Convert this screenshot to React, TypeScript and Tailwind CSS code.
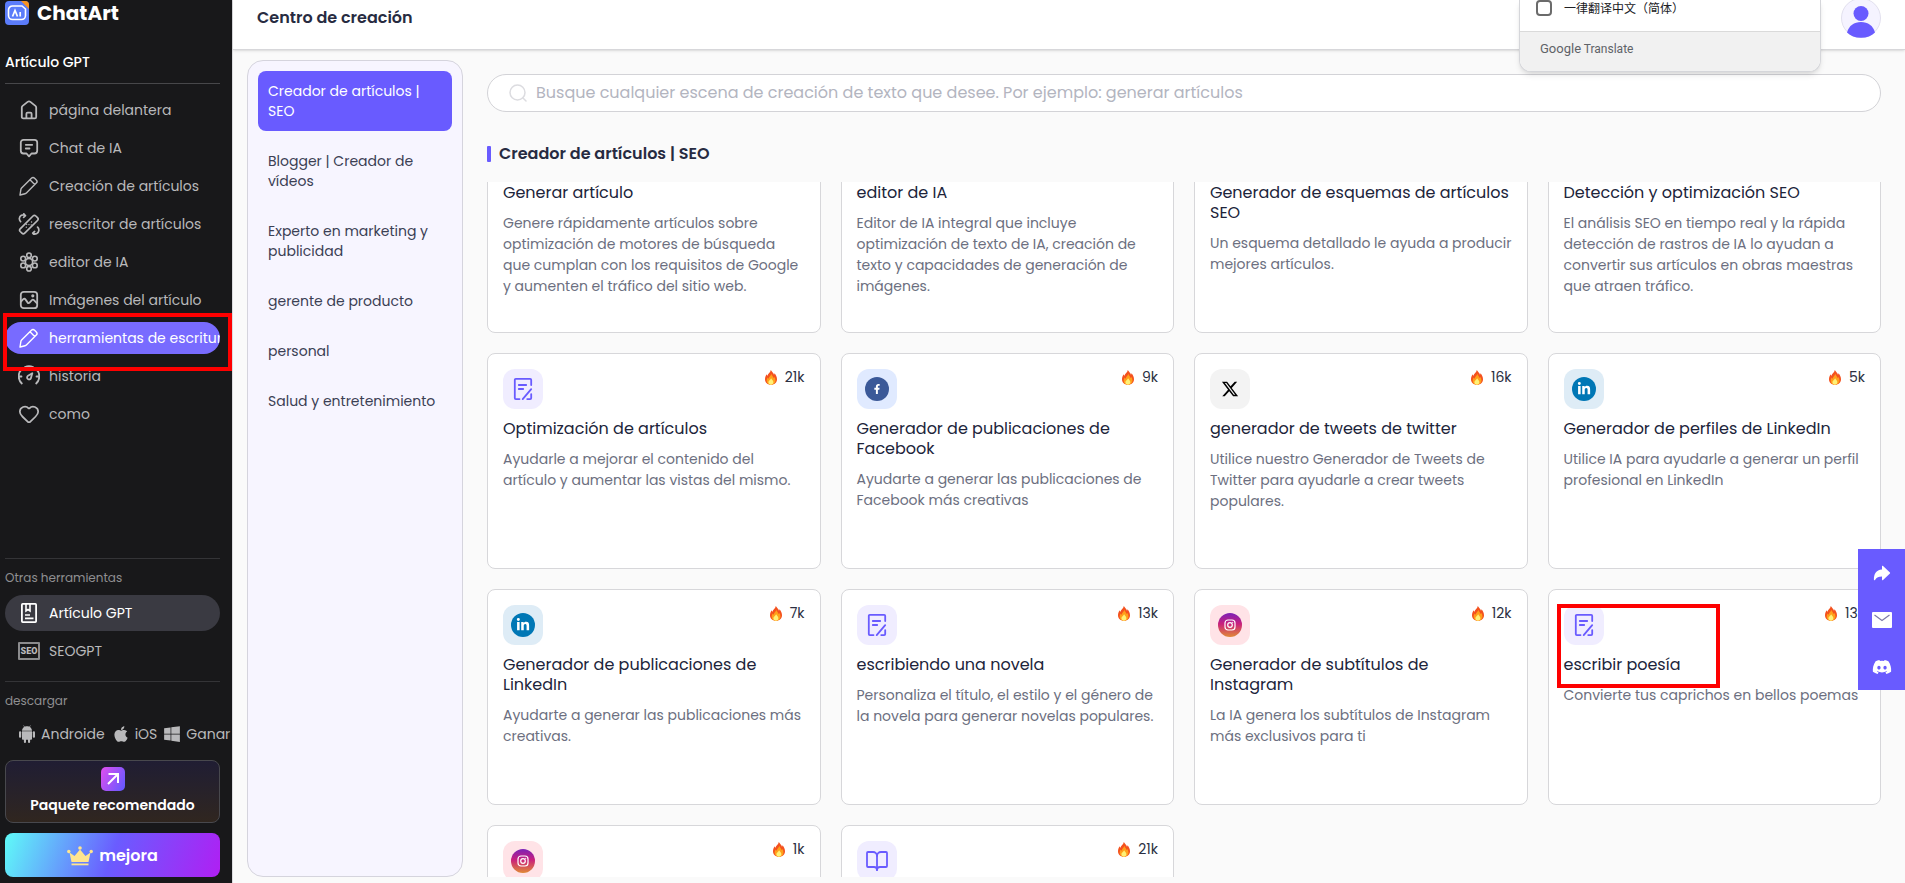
import React, { useState } from "react"
import { BookOpen, Heart } from "lucide-react";
import { FaApple, FaWindows, FaFacebookF, FaLinkedinIn, FaDiscord } from "react-icons/fa";
import { FaXTwitter } from "react-icons/fa6";
import { IoArrowRedo } from "react-icons/io5";

/* ---------- iconos ---------- */

const Line = ({ children }: { children: React.ReactNode }) => (
    <svg viewBox="0 0 22 22" className="h-[22px] w-[22px] shrink-0" fill="none" stroke="currentColor" strokeWidth="1.8" strokeLinecap="round" strokeLinejoin="round">
        {children}
    </svg>
)

const HomeIcon = () => (
    <Line>
        <path d="M3.8 8.6c0-.7.3-1.3.8-1.7l5-4c.8-.6 2-.6 2.8 0l5 4c.5.4.8 1 .8 1.7v9.3c0 .8-.6 1.4-1.4 1.4H5.2c-.8 0-1.400-.6-1.400-1.400z" />
        <path d="M8.4 19v-4.200c0-.7.5-1.200 1.200-1.200h2.800c.7 0 1.200.5 1.200 1.200V19" />
    </Line>
)

const ChatIcon = () => (
    <Line>
        <path d="M5.5 2.800h11a2.700 2.700 0 0 1 2.700 2.700v8.300a2.700 2.700 0 0 1-2.700 2.700h-3L11 19.400l-2.500-2.900h-3a2.700 2.700 0 0 1-2.700-2.700V5.500a2.700 2.700 0 0 1 2.700-2.700z" />
        <path d="M7.800 7.800h6.400M7.800 11.500h3.700" />
    </Line>
)

const PencilIcon = () => (
    <Line>
        <path strokeWidth="1.4" d="M2 20l.9-5.600c.1-.5.300-.9.700-1.300L13.400 3.200c.9-.9 2.300-.9 3.200 0l1.700 1.700c.9.900.9 2.300 0 3.200L8.400 18c-.4.400-.8.600-1.300.7zM12 4.800l4.700 4.700" />
    </Line>
)

const RewriteIcon = () => (
    <Line>
        <g strokeWidth="1.7">
            <path d="M2.200 15.800 15 3a2 2 0 0 1 2.800 0l1.700 1.700a2 2 0 0 1 0 2.800L6.700 20.200a2 2 0 0 1-2.800 0l-1.700-1.700a2 2 0 0 1 0-2.700z" />
            <path d="M2.600 8.600C.7 6.800 1 3.600 3.400 2.300 5 1.500 6.500 1.900 7.400 2.600M5.800.8l1.700 1.900-1.900 1.600" />
            <path d="M19.600 14.200c1.900 1.800 1.600 5-.8 6.300-1.600.8-3.100.4-4-.3M16.400 22l-1.700-1.900 1.900-1.600" />
        </g>
        <path d="M8.300 14.200h.1M10.900 11.600h.1M13.500 9h.1M8.600 11.300h.1M13.200 11.900h.1" strokeWidth="1.3" />
    </Line>
)

const AtomIcon = () => (
    <Line>
        <g strokeWidth="1.6">
            <circle cx="11" cy="11" r="3.600" />
            <circle cx="11" cy="4.300" r="2.300" />
            <circle cx="11" cy="17.700" r="2.300" />
            <circle cx="5.200" cy="7.600" r="2.400" />
            <circle cx="16.800" cy="7.600" r="2.400" />
            <circle cx="5.200" cy="14.400" r="2.400" />
            <circle cx="16.800" cy="14.400" r="2.400" />
        </g>
    </Line>
)

const ImageIcon = () => (
    <Line>
        <rect x="2.8" y="2.8" width="16.4" height="16.4" rx="3" />
        <path d="M3 12.500l2.300-2.300c.7-.7 1.600-.6 2.100.2l2.300 3.200c.5.700 1.300.8 1.900.1l2.300-2.500c.6-.7 1.400-.7 2 0l2.900 3" />
        <circle cx="14.8" cy="6.8" r=".7" fill="currentColor" />
    </Line>
)

const GaugeIcon = () => (
    <Line>
        <path d="M3.800 18.500a10 10 0 0 1 0-14.500M18.200 18.500a10 10 0 0 0 0-14.500M7 2c2.500-1.100 5.500-1.100 8 0M1 11.500h2.500M18.500 11.500H21" />
        <path d="M14.300 8.300l-1.500 5.200a2 2 0 1 1-2.800-2.700z" />
    </Line>
)

const HeartIcon = () => <Heart size={22} strokeWidth={1.9} className="shrink-0" />

const NoteIcon = () => (
    <svg viewBox="0 0 22 22" className="h-[22px] w-[22px] shrink-0" fill="none" stroke="currentColor" strokeWidth="1.8">
        <rect x="3.9" y="1.900" width="14.200" height="18.200" rx=".8" />
        <path d="M8 2v7l2-1.400L12 9V2M7 13h5M7 16.400h8.500" strokeWidth="1.6" />
    </svg>
)

const SeoIcon = () => (
    <span className="flex h-[18px] w-[22px] shrink-0 items-center justify-center rounded-[1px] border-2 border-[#8b8b8d] font-[Roboto,sans-serif] text-[9px] font-black leading-none">SEO</span>
)

const AndroidIcon = () => (
    <svg viewBox="0 0 16 18" className="h-[18px] w-4 shrink-0" fill="currentColor">
        <path d="M3 5.700C3.100 3.800 4 2.600 5.200 1.900L4.300.5l.4-.3 1 1.500C7.200 1.100 8.800 1.100 10.300 1.700l1-1.500.4.3-.9 1.400C12 2.600 12.900 3.800 13 5.700z" />
        <path d="M3 6.300h10v7.400c0 .7-.5 1.100-1.100 1.100h-.8v2.100a1 1 0 0 1-2.100 0v-2.100H7v2.100a1 1 0 0 1-2.100 0v-2.100h-.8c-.6 0-1.100-.4-1.100-1.100z" />
        <rect x="0" y="6.200" width="2.200" height="6.600" rx="1.100" />
        <rect x="13.800" y="6.200" width="2.200" height="6.600" rx="1.100" />
    </svg>
)

const FireIcon = () => (
    <svg viewBox="0 0 12 15" className="h-[15px] w-3">
        <path d="M5.800 0c.8 1.500 2.600 2.800 3.200 4.700.3-.4.5-.9.500-1.400 1.400 1.500 2.500 3.800 2.500 6 0 3.400-2.600 5.500-6 5.500s-6-2.100-6-5.500c0-2 .8-3.700 1.700-5 .1.800.3 1.200.7 1.500C2.900 3.700 5.500 2.500 5.800 0z" fill="#f4511e" />
        <path d="M6.300 3.800c.5 1.700 1.700 2.500 2.200 4.200.4-.2.700-.6.8-1 .7 1 1.200 2.200 1.200 3.400 0 2.600-2 4.300-4.500 4.300s-4.300-1.600-4.300-4c0-1.300.5-2.300 1.100-3.100.1.600.4 1 .8 1.200.2-2 2.300-2.900 2.700-5z" fill="#ff9f1a" />
        <path d="M6.100 8.200c.4 1.200 2.300 2 2.300 4 0 1.600-1.100 2.500-2.500 2.500s-2.500-1-2.500-2.500c0-1.800 2.300-2.300 2.700-4z" fill="#fff176" />
    </svg>
)

const DocEdit = () => (
    <svg viewBox="0 0 24 24" className="h-6 w-6 text-[#695bff]" fill="none" stroke="currentColor" strokeWidth="1.8" strokeLinecap="round" strokeLinejoin="round">
        <path d="M20.200 8V2.900a1 1 0 0 0-1-1H4.800a1 1 0 0 0-1 1v18.200a1 1 0 0 0 1 1h3.700M7.800 8h7.400M7.800 12h4.400M11.700 22.100l8.500-10M16.200 22.100h3a1 1 0 0 0 1-1v-4" />
    </svg>
)

const Instagram = () => (
    <svg viewBox="0 0 24 24" className="h-6 w-6">
        <defs>
            <linearGradient id="insta" x1="0" y1="0" x2="0" y2="1">
                <stop offset="0" stopColor="#7b22b8" />
                <stop offset=".45" stopColor="#c9207c" />
                <stop offset="1" stopColor="#e08a36" />
            </linearGradient>
        </defs>
        <circle cx="12" cy="12" r="12" fill="url(#insta)" />
        <g fill="none" stroke="#fff" strokeWidth="1.2">
            <rect x="7" y="7" width="10" height="10" rx="3" />
            <circle cx="12" cy="12" r="2.3" />
        </g>
        <circle cx="14.7" cy="9.3" r=".6" fill="#fff" />
    </svg>
)

const cardIcons = {
    doc: { bg: "bg-[#f0edff]", icon: <DocEdit /> },
    facebook: { bg: "bg-[#e0eaff]", icon: <span className="flex h-6 w-6 items-center justify-center rounded-full bg-[#3b5998] text-white"><FaFacebookF size={10} /></span> },
    x: { bg: "bg-[#f3f3f3]", icon: <FaXTwitter size={18} className="text-black" /> },
    linkedin: { bg: "bg-[#deecf6]", icon: <span className="flex h-6 w-6 items-center justify-center rounded-full bg-[#0077b5] text-white"><FaLinkedinIn size={14} /></span> },
    instagram: { bg: "bg-[#ffe3e7]", icon: <Instagram /> },
    book: { bg: "bg-[#f0edff]", icon: <BookOpen size={24} strokeWidth={1.8} className="text-[#695bff]" /> },
}

/* ---------- datos ---------- */

const menu = [
    { name: "página delantera", icon: <HomeIcon /> },
    { name: "Chat de IA", icon: <ChatIcon /> },
    { name: "Creación de artículos", icon: <PencilIcon /> },
    { name: "reescritor de artículos", icon: <RewriteIcon /> },
    { name: "editor de IA", icon: <AtomIcon /> },
    { name: "Imágenes del artículo", icon: <ImageIcon /> },
    { name: "herramientas de escritura", icon: <PencilIcon />, active: true },
    { name: "historia", icon: <GaugeIcon /> },
    { name: "como", icon: <HeartIcon /> },
]

const categories = [
    "Creador de artículos | SEO",
    "Blogger | Creador de vídeos",
    "Experto en marketing y publicidad",
    "gerente de producto",
    "personal",
    "Salud y entretenimiento",
]

type CardData = {
    icon: keyof typeof cardIcons
    heat: string
    title: string
    text: string
    marked?: boolean
}

const cards: CardData[] = [
    { icon: "doc", heat: "32k", title: "Generar artículo", text: "Genere rápidamente artículos sobre optimización de motores de búsqueda que cumplan con los requisitos de Google y aumenten el tráfico del sitio web." },
    { icon: "doc", heat: "18k", title: "editor de IA", text: "Editor de IA integral que incluye optimización de texto de IA, creación de texto y capacidades de generación de imágenes." },
    { icon: "doc", heat: "11k", title: "Generador de esquemas de artículos SEO", text: "Un esquema detallado le ayuda a producir mejores artículos." },
    { icon: "doc", heat: "15k", title: "Detección y optimización SEO", text: "El análisis SEO en tiempo real y la rápida detección de rastros de IA lo ayudan a convertir sus artículos en obras maestras que atraen tráfico." },
    { icon: "doc", heat: "21k", title: "Optimización de artículos", text: "Ayudarle a mejorar el contenido del artículo y aumentar las vistas del mismo." },
    { icon: "facebook", heat: "9k", title: "Generador de publicaciones de Facebook", text: "Ayudarte a generar las publicaciones de Facebook más creativas" },
    { icon: "x", heat: "16k", title: "generador de tweets de twitter", text: "Utilice nuestro Generador de Tweets de Twitter para ayudarle a crear tweets populares." },
    { icon: "linkedin", heat: "5k", title: "Generador de perfiles de LinkedIn", text: "Utilice IA para ayudarle a generar un perfil profesional en LinkedIn" },
    { icon: "linkedin", heat: "7k", title: "Generador de publicaciones de LinkedIn", text: "Ayudarte a generar las publicaciones más creativas." },
    { icon: "doc", heat: "13k", title: "escribiendo una novela", text: "Personaliza el título, el estilo y el género de la novela para generar novelas populares." },
    { icon: "instagram", heat: "12k", title: "Generador de subtítulos de Instagram", text: "La IA genera los subtítulos de Instagram más exclusivos para ti" },
    { icon: "doc", heat: "13k", title: "escribir poesía", text: "Convierte tus caprichos en bellos poemas", marked: true },
    { icon: "instagram", heat: "1k", title: "", text: "" },
    { icon: "book", heat: "21k", title: "", text: "" },
]

/* ---------- componentes ---------- */

const Sidebar = () => (
    <aside className="flex w-[233px] shrink-0 flex-col border-r border-[#dcdcdf] bg-[#18181a] pb-[6px] pl-[5px] text-[#b9b9bb]">
        <div className="mt-px flex h-6 items-center gap-2 text-white">
            <svg viewBox="0 0 24 24" className="h-6 w-6">
                <rect width="24" height="24" rx="4" fill="#5b7cfa" />
                <path d="M16 0h4a4 4 0 0 1 4 4v4z" fill="#f7931e" />
                <path d="M7.500 5h9.500l3.500 3v6.500a4 4 0 0 1-4 4h-9a4 4 0 0 1-4-4V9a4 4 0 0 1 4-4z" fill="none" stroke="#fff" strokeWidth="1.6" />
                <path d="M7.500 15.500l2.500-6 2.500 6M15.200 11v4.500" fill="none" stroke="#fff" strokeWidth="1.7" />
            </svg>
            <span className="text-[20px] font-bold leading-6">ChatArt</span>
        </div>

        <div className="mt-[27px] mr-3 border-b border-[#47474a] pb-[11px] text-[14px] font-medium leading-5 text-white">Artículo GPT</div>

        <nav className="mt-[10px] mr-3 flex flex-col gap-[6px] text-[14px]">
            {menu.map((each) => (
                <div key={each.name} className="relative">
                    <a
                        href="#"
                        className={each.active
                            ? "flex h-8 items-center gap-[9px] overflow-hidden whitespace-nowrap rounded-full bg-[#786bff] pl-[13px] text-white"
                            : "flex h-8 items-center gap-[9px] whitespace-nowrap pl-[13px]"}
                    >
                        {each.icon}
                        {each.name}
                    </a>
                    {each.active && <div className="pointer-events-none absolute -top-[9px] -right-3 -bottom-[17px] -left-[2px] z-10 border-4 border-[#fe0000]" />}
                </div>
            ))}
        </nav>

        <div className="mt-auto mr-3 border-t border-[#343437] pt-[9px] text-[12px] leading-5 text-[#8f8f91]">Otras herramientas</div>
        <a href="#" className="mt-[7px] mr-3 flex h-9 items-center gap-[9px] rounded-full bg-[#3a3a42] pl-[13px] text-[14px] text-white">
            <NoteIcon />Artículo GPT
        </a>
        <a href="#" className="mt-1 mr-3 flex h-8 items-center gap-[9px] pl-[13px] text-[14px]">
            <SeoIcon />SEOGPT
        </a>

        <div className="mt-[14px] mr-3 border-t border-[#343437] pt-[9px] text-[12px] leading-5 text-[#8f8f91]">descargar</div>
        <div className="mt-[13px] flex h-5 items-center overflow-hidden whitespace-nowrap pl-[14px] text-[14px]">
            <a href="#" className="flex items-center gap-[6px]"><AndroidIcon />Androide</a>
            <a href="#" className="ml-[7px] flex items-center gap-[5px]"><FaApple size={18} />iOS</a>
            <a href="#" className="ml-[6px] flex items-center gap-[5px]"><FaWindows size={18} />Ganar</a>
        </div>

        <button className="mt-4 mr-3 flex h-[63px] flex-col items-center rounded-lg border border-[#48484d] bg-linear-to-b from-[#201d33] to-[#30261f] pt-[6px] text-[14px] font-semibold leading-5 text-white">
            <svg viewBox="0 0 24 24" className="mb-1 h-6 w-6 shrink-0">
                <defs>
                    <linearGradient id="arrow" x1="0" y1="0.2" x2="1" y2="0.7">
                        <stop offset="0" stopColor="#d94ff0" />
                        <stop offset="1" stopColor="#6b58ff" />
                    </linearGradient>
                </defs>
                <rect width="24" height="24" rx="5" fill="url(#arrow)" />
                <path d="M7 17 16.500 7.500M7.500 7h9.500v9" fill="none" stroke="#fff" strokeWidth="2" />
            </svg>
            Paquete recomendado
        </button>
        <button className="mt-[10px] mr-3 flex h-11 items-center justify-center gap-[6px] rounded-lg bg-[linear-gradient(110deg,#5ffbf8_0%,#6a5cff_50%,#b01ff3_100%)] pt-[2px] text-[16px] font-semibold text-white">
            <svg viewBox="0 0 26 20" className="h-5 w-[26px]" fill="#ffe58f">
                <path d="M2.500 6.500 7.500 10 13 3.500l5.500 6.500 5-3.500L21.500 16h-17z" />
                <circle cx="13" cy="2" r="1.800" />
                <circle cx="1.800" cy="5.500" r="1.700" />
                <circle cx="24.200" cy="5.500" r="1.700" />
                <path d="M4.500 17.500h17v1.800h-17z" />
            </svg>
            mejora
        </button>
    </aside>
)

const ToolCard = ({ icon, heat, title, text, marked }: CardData) => (
    <a href="#" className="relative flex h-[216px] flex-col rounded-lg border border-[#d7d7da] bg-white p-[15px]">
        <div className="flex items-start justify-between">
            <div className={`flex h-10 w-10 items-center justify-center rounded-xl ${cardIcons[icon].bg}`}>{cardIcons[icon].icon}</div>
            <div className="-mt-[2px] flex items-center gap-2 text-[14px] leading-5 text-[#2b2f42]">
                <FireIcon />{heat}
            </div>
        </div>
        <h3 className="mt-[10px] text-[16px] leading-5 text-[#20243a]">{title}</h3>
        <p className="mt-[10px] text-[14px] leading-[21px] text-[#6c6f80]">{text}</p>
        {marked && <div className="pointer-events-none absolute top-[14px] left-2 h-[84px] w-[163px] border-4 border-[#fe0000]" />}
    </a>
)

const TranslatePopup = () => (
    <div className="absolute top-0 right-[84px] z-20 w-[302px] overflow-hidden rounded-b-xl border border-t-0 border-[#d5d6da] bg-white shadow-md">
        <label className="flex h-[31px] items-start gap-3 pl-4 text-[12px] leading-4 text-[#202124]">
            <input type="checkbox" className="h-4 w-4 appearance-none rounded-sm border-2 border-[#6b6b6b] bg-white" />
            <span className="font-['Noto_Sans_CJK_SC',sans-serif]">一律翻译中文（简体）</span>
        </label>
        <div className="h-10 border-t border-[#dadada] bg-[#f1f1f1] pt-2 pl-5 font-[Roboto,sans-serif] text-[12px] leading-[18px] text-[#5f6368]">
            <span className="text-[13px]">Google</span> Translate
        </div>
    </div>
)

export default function App() {
    const [current, setCurrent] = useState(0);
    const [search, setSearch] = useState("");

    return (
        <div className="relative flex h-screen overflow-hidden bg-[#fafafa] font-[Poppins,Inter,sans-serif]">
            <Sidebar />

            <div className="flex min-w-0 flex-1 flex-col">
                <header className="flex h-[50px] shrink-0 items-start justify-between border-b border-[#d7d7da] bg-white pr-6 pl-6 shadow-sm">
                    <h1 className="mt-2 text-[16px] font-semibold leading-5 text-[#272b41]">Centro de creación</h1>
                    <button aria-label="perfil" className="-mt-[2px]">
                        <svg viewBox="0 0 40 40" className="h-10 w-10">
                            <circle cx="20" cy="20" r="19.500" fill="#f5f3ff" stroke="#e2e0ee" />
                            <circle cx="20" cy="15.500" r="7.500" fill="#695bff" />
                            <path d="M6 34.500C8 27.500 13 24 20 24s12 3.500 14 10.500C30.500 38 26 39.800 20 39.800S9.500 38 6 34.500z" fill="#695bff" />
                        </svg>
                    </button>
                </header>

                <div className="flex min-h-0 flex-1 gap-6 pt-[10px] pr-6 pb-[6px] pl-[14px]">
                    {/* categorías */}
                    <div className="flex w-[216px] shrink-0 flex-col gap-[10px] rounded-2xl border border-[#d5d4dd] bg-[#f7f5ff] p-[10px] text-[14px] leading-5 text-[#3b4054]">
                        {categories.map((each, index) => (
                            <button
                                key={each}
                                onClick={() => setCurrent(index)}
                                className={index === current
                                    ? "rounded-lg bg-[#695bff] p-[10px] text-left text-white"
                                    : "rounded-lg p-[10px] text-left"}
                            >
                                {each}
                            </button>
                        ))}
                    </div>

                    <main className="flex min-w-0 flex-1 flex-col">
                        <label className="mt-[14px] flex h-[38px] shrink-0 items-center gap-[9px] rounded-full border border-[#d3d3d7] bg-white pl-[21px]">
                            <svg viewBox="0 0 18 18" className="h-[18px] w-[18px]" fill="none" stroke="#dcdce0" strokeWidth="1.5" strokeLinecap="round">
                                <circle cx="8.500" cy="8.500" r="7.500" />
                                <path d="m14 14 3 3" />
                            </svg>
                            <input
                                value={search}
                                onChange={(e) => setSearch(e.target.value)}
                                placeholder="Busque cualquier escena de creación de texto que desee. Por ejemplo: generar artículos"
                                className="flex-1 text-[16px] outline-none placeholder:text-[#b3b5bf]"
                            />
                        </label>

                        <div className="mt-8 flex shrink-0 items-center gap-2 leading-5">
                            <span className="h-4 w-1 rounded-[1px] bg-[#695bff]" />
                            <h2 className="text-[16px] font-semibold leading-5 text-[#272b41]">{categories[current]}</h2>
                        </div>

                        {/* lista desplazada: la primera fila queda cortada arriba */}
                        <div className="mt-[18px] min-h-0 flex-1 overflow-hidden">
                            <div className="-mt-[65px] grid grid-cols-4 gap-5">
                                {cards.map((each, index) => (
                                    <ToolCard key={index} {...each} />
                                ))}
                            </div>
                        </div>
                    </main>
                </div>
            </div>

            <TranslatePopup />

            <div className="absolute top-[549px] right-0 z-20 flex w-[47px] flex-col bg-[#695bff] text-white">
                <button aria-label="compartir" className="flex h-[47px] items-center justify-center"><IoArrowRedo size={20} /></button>
                <button aria-label="correo" className="flex h-[47px] items-center justify-center">
                    <svg viewBox="0 0 20 16" className="h-4 w-5">
                        <rect width="20" height="16" rx="1" fill="#fff" />
                        <path d="M2.500 3 10 8.500 17.500 3" fill="none" stroke="#7d79a8" strokeWidth="1.2" />
                    </svg>
                </button>
                <button aria-label="discord" className="flex h-[47px] items-center justify-center"><FaDiscord size={20} /></button>
            </div>
        </div>
    )
}
